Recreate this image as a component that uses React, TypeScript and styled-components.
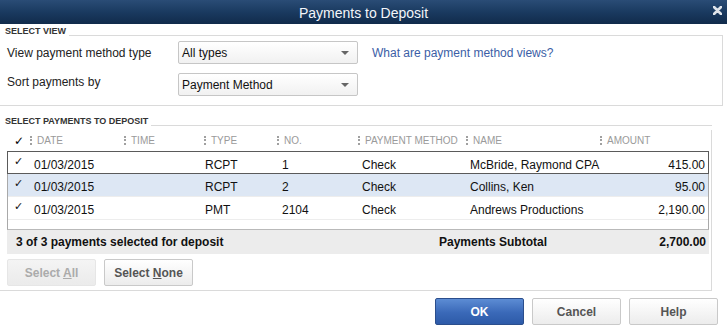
import React from 'react'
import styled, { createGlobalStyle, css } from 'styled-components'

const GlobalStyle = createGlobalStyle`
  html, body {
    margin: 0;
    padding: 0;
    background: #ffffff;
  }
`

const Window = styled.div`
  width: 727px;
  height: 325px;
  overflow: hidden;
  background: #ffffff;
  font-family: 'Liberation Sans', Arial, sans-serif;
  color: #111;
`

const TitleBar = styled.div`
  height: 24px;
  display: grid;
  grid-template-columns: 1fr auto 1fr;
  align-items: center;
  background: linear-gradient(to bottom, #2a4c76 0%, #1a3a60 50%, #112b4b 100%);
  color: #f4f6f9;
  font-size: 14px;
`

const Title = styled.div`
  grid-column: 2;
  padding-top: 1px;
`

const CloseButton = styled.div`
  grid-column: 3;
  justify-self: end;
  display: flex;
  margin-right: 5px;
  margin-bottom: 4px;
`

const GroupHeader = styled.div<{ $top: number; $right: number }>`
  display: flex;
  align-items: flex-end;
  height: 11px;
  margin-top: ${(p) => p.$top}px;
  margin-right: ${(p) => p.$right}px;
  padding-left: 5px;
`

const Legend = styled.span`
  font-size: 9px;
  font-weight: bold;
  color: #333;
  line-height: 9px;
`

const Rule = styled.div`
  flex: 1;
  margin-left: 3px;
  border-bottom: 1px solid #dadada;
`

const GroupBox = styled.div<{ $right: number }>`
  margin-right: ${(p) => p.$right}px;
  border-right: 1px solid #dadada;
  border-bottom: 1px solid #dadada;
`

const ViewGrid = styled.div`
  display: grid;
  grid-template-columns: 157px 180px auto;
  column-gap: 14px;
  row-gap: 9px;
  align-items: center;
  padding: 5px 0 9px 7px;
`

const FieldLabel = styled.div<{ $raise?: boolean }>`
  font-size: 12px;
  color: #222;
  margin-bottom: ${(p) => (p.$raise ? 6 : 0)}px;
`

const Dropdown = styled.div`
  height: 21px;
  display: flex;
  align-items: center;
  justify-content: space-between;
  padding: 0 8px 0 3px;
  border: 1px solid #c6c6c6;
  border-radius: 2px;
  background: linear-gradient(to bottom, #ffffff, #f1f1f1);
  font-size: 12px;
  color: #111;
`

const Arrow = styled.span`
  width: 0;
  height: 0;
  border-left: 4px solid transparent;
  border-right: 4px solid transparent;
  border-top: 4px solid #666;
`

const HelpLink = styled.a`
  font-size: 12px;
  color: #3b5ea6;
  text-decoration: none;
`

const TableWrap = styled.div`
  margin: 4px 2px 0 7px;
`

const COLS = '23px 94px 80px 73px 81px 108px 134px 1fr'

const HeaderRow = styled.div`
  display: grid;
  grid-template-columns: ${COLS};
  height: 21px;
  align-items: center;
`

const HeaderCell = styled.div`
  display: flex;
  align-items: center;
  gap: 5px;
  font-size: 10px;
  color: #9a9a9a;
  text-transform: uppercase;
  white-space: nowrap;
`

const CheckHead = styled.div`
  padding-left: 7px;
  font-size: 12px;
  font-weight: bold;
  color: #000;
  font-family: 'DejaVu Sans', sans-serif;
`

const Grip = styled.span`
  width: 2px;
  height: 9px;
  flex: none;
  background: repeating-linear-gradient(to bottom, #a0a0a0 0 2px, transparent 2px 3.5px);
`

const Body = styled.div`
  height: 78px;
  border: 1px solid #a9a9a9;
  border-top: none;
  border-bottom: 1px solid #b9b9b9;
`

const Row = styled.div<{ $focused?: boolean; $selected?: boolean }>`
  display: grid;
  grid-template-columns: ${COLS};
  height: 23px;
  align-items: center;
  font-size: 12px;
  color: #111;
  box-sizing: border-box;
  border-bottom: 1px solid #ededed;
  ${(p) =>
    p.$selected &&
    css`
      background: #dde7f4;
    `}
  ${(p) =>
    p.$focused &&
    css`
      border: 1px solid #5a5a5a;
      margin: 0 -1px;
    `}
`

const Cell = styled.div<{ $pad?: number; $right?: boolean }>`
  padding-left: ${(p) => p.$pad ?? 0}px;
  padding-right: ${(p) => (p.$right ? 3 : 0)}px;
  text-align: ${(p) => (p.$right ? 'right' : 'left')};
  white-space: nowrap;
  padding-top: 4px;
`

const CheckCell = styled.div`
  padding-left: 6px;
  font-size: 11px;
  font-family: 'DejaVu Sans', sans-serif;
  color: #111;
  padding-bottom: 3px;
`

const Footer = styled.div`
  display: grid;
  grid-template-columns: 423px 1fr auto;
  align-items: center;
  height: 24px;
  padding: 0 3px 0 9px;
  background: #ececec;
  font-size: 12px;
  font-weight: bold;
  color: #111;
`

const ButtonRow = styled.div<{ $end?: boolean }>`
  display: flex;
  gap: 8px;
  justify-content: ${(p) => (p.$end ? 'flex-end' : 'flex-start')};
  padding: ${(p) => (p.$end ? '7px 9px 0 0' : '5px 0 4px 7px')};
`

const Button = styled.button<{ $variant?: 'primary' | 'disabled' }>`
  width: 89px;
  height: 27px;
  border: 1px solid #c9c9c9;
  border-radius: 2px;
  background: linear-gradient(to bottom, #ffffff, #ececec);
  font-family: 'Liberation Sans', Arial, sans-serif;
  font-size: 12px;
  font-weight: bold;
  color: #555;
  padding: 0;
  ${(p) =>
    p.$variant === 'primary' &&
    css`
      border-color: #2b4e8c;
      background: linear-gradient(to bottom, #5c8cd4, #3a69b8 55%, #2d5aa8);
      color: #ffffff;
    `}
  ${(p) =>
    p.$variant === 'disabled' &&
    css`
      border-color: #e6e6e6;
      background: linear-gradient(to bottom, #f4f4f4, #ebebeb);
      color: #ababab;
    `}
`

type Payment = {
  date: string
  type: string
  no: string
  method: string
  name: string
  amount: string
}

const payments: Payment[] = [
  { date: '01/03/2015', type: 'RCPT', no: '1', method: 'Check', name: 'McBride, Raymond CPA', amount: '415.00' },
  { date: '01/03/2015', type: 'RCPT', no: '2', method: 'Check', name: 'Collins, Ken', amount: '95.00' },
  { date: '01/03/2015', type: 'PMT', no: '2104', method: 'Check', name: 'Andrews Productions', amount: '2,190.00' },
]

const headers = ['Date', 'Time', 'Type', 'No.', 'Payment Method', 'Name', 'Amount']

const App = () => {
  return (
    <Window>
      <GlobalStyle />
      <TitleBar>
        <Title>Payments to Deposit</Title>
        <CloseButton>
          <svg width="9" height="9" viewBox="0 0 9 9">
            <path d="M1 1 L8 8 M8 1 L1 8" stroke="#dfe4ea" strokeWidth="2.6" strokeLinecap="round" />
          </svg>
        </CloseButton>
      </TitleBar>

      <GroupHeader $top={1} $right={4}>
        <Legend>SELECT VIEW</Legend>
        <Rule />
      </GroupHeader>
      <GroupBox $right={4}>
        <ViewGrid>
          <FieldLabel>View payment method type</FieldLabel>
          <Dropdown>
            All types
            <Arrow />
          </Dropdown>
          <HelpLink href="#">What are payment method views?</HelpLink>
          <FieldLabel $raise>Sort payments by</FieldLabel>
          <Dropdown>
            Payment Method
            <Arrow />
          </Dropdown>
        </ViewGrid>
      </GroupBox>

      <GroupHeader $top={9} $right={15}>
        <Legend>SELECT PAYMENTS TO DEPOSIT</Legend>
        <Rule />
      </GroupHeader>
      <GroupBox $right={15}>
        <TableWrap>
          <HeaderRow>
            <CheckHead>✓</CheckHead>
            {headers.map((h) => (
              <HeaderCell key={h}>
                <Grip />
                {h}
              </HeaderCell>
            ))}
          </HeaderRow>
          <Body>
            {payments.map((p, i) => (
              <Row key={p.no} $focused={i === 0} $selected={i === 1}>
                <CheckCell>✓</CheckCell>
                <Cell $pad={3}>{p.date}</Cell>
                <Cell />
                <Cell $pad={0}>{p.type}</Cell>
                <Cell $pad={4}>{p.no}</Cell>
                <Cell $pad={3}>{p.method}</Cell>
                <Cell $pad={3}>{p.name}</Cell>
                <Cell $right>{p.amount}</Cell>
              </Row>
            ))}
          </Body>
          <Footer>
            <span>3 of 3 payments selected for deposit</span>
            <span>Payments Subtotal</span>
            <span>2,700.00</span>
          </Footer>
        </TableWrap>
        <ButtonRow>
          <Button $variant="disabled">
            Select <u>A</u>ll
          </Button>
          <Button>
            Select <u>N</u>one
          </Button>
        </ButtonRow>
      </GroupBox>

      <ButtonRow $end>
        <Button $variant="primary">OK</Button>
        <Button>Cancel</Button>
        <Button>Help</Button>
      </ButtonRow>
    </Window>
  )
}

export default App
